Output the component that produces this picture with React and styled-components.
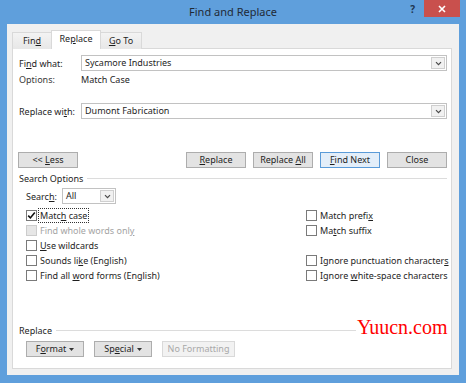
import React from 'react';
import styled, { createGlobalStyle } from 'styled-components';

const Global = createGlobalStyle`
  html, body { margin: 0; padding: 0; background: #fff; }
  body { font-family: "Noto Sans", "Open Sans", sans-serif; }
  * { box-sizing: border-box; }
`;

const Window = styled.div`
  position: relative;
  width: 466px;
  height: 383px;
  background: #5f9fdc;
  display: flex;
  flex-direction: column;
  padding: 0 7px 8px 7px;
  font-family: "Noto Sans", "Open Sans", sans-serif;
  font-size: 9px;
  color: #1e1e1e;
`;

const TitleBar = styled.div`
  height: 24px;
  margin: 0 -7px;
  display: grid;
  grid-template-columns: 1fr auto 1fr;
  align-items: start;
`;

const Title = styled.div`
  grid-column: 2;
  font-size: 11px;
  line-height: 24px;
  color: #1f2a36;
`;

const Controls = styled.div`
  grid-column: 3;
  justify-self: end;
  display: flex;
  align-items: flex-start;
  gap: 9px;
  padding-right: 6px;
`;

const Help = styled.div`
  font-weight: 700;
  font-size: 10px;
  line-height: 18px;
  color: #1d3650;
`;

const CloseBtn = styled.div`
  width: 36px;
  height: 17px;
  background: #c9504d;
  display: flex;
  align-items: center;
  justify-content: center;
`;

const Body = styled.div`
  flex: 1;
  background: #f0f0f0;
  padding: 6px 7px 6px 5px;
  display: flex;
  flex-direction: column;
`;

const Tabs = styled.div`
  display: flex;
  align-items: flex-end;
  height: 19px;
  margin-bottom: -1px;
  padding-left: 1px;
`;

const Tab = styled.div`
  width: ${p => p.$w}px;
  height: ${p => (p.$active ? 19 : 17)}px;
  margin-left: -1px;
  border: 1px solid #d9d9d9;
  border-bottom: none;
  background: ${p => (p.$active ? '#ffffff' : 'linear-gradient(#f3f3f3, #e7e7e7)')};
  position: relative;
  z-index: ${p => (p.$active ? 2 : 1)};
  text-align: center;
  line-height: 15px;
  color: #1e1e1e;
`;

const Panel = styled.div`
  flex: 1;
  background: #fff;
  border: 1px solid #d9d9d9;
  padding: 0 4px 0 6px;
  display: flex;
  flex-direction: column;
`;

const FieldRow = styled.div`
  display: flex;
  align-items: center;
  margin-top: ${p => p.$mt}px;
  height: ${p => p.$h || 16}px;
  padding-left: ${p => p.$pl || 0}px;
`;

const FieldLabel = styled.div`
  width: ${p => p.$w || 62}px;
  flex: none;
  color: ${p => (p.$muted ? '#3a3a3a' : '#1e1e1e')};
`;

const Combo = styled.div`
  display: flex;
  align-items: stretch;
  height: 16px;
  width: ${p => (p.$w ? `${p.$w}px` : 'auto')};
  flex: ${p => (p.$w ? 'none' : '1')};
  border: 1px solid #c2c2c2;
  background: #fff;
`;

const ComboText = styled.div`
  flex: 1;
  padding-left: 3px;
  line-height: 14px;
  white-space: nowrap;
  overflow: hidden;
`;

const ComboArrow = styled.div`
  width: 14px;
  flex: none;
  margin: 1px;
  border: 1px solid #cfcfcf;
  background: #f1f1f1;
  display: flex;
  align-items: center;
  justify-content: center;
`;

const Key = styled.span`
  text-decoration: underline;
  text-underline-offset: 1px;
`;

const ButtonRow = styled.div`
  display: flex;
  align-items: center;
  gap: ${p => p.$gap || 7}px;
  margin-top: ${p => p.$mt}px;
  padding-left: ${p => p.$pl || 0}px;
  margin-left: ${p => p.$ml || 0}px;
`;

const Spacer = styled.div`
  flex: 1;
`;

const Button = styled.div`
  width: ${p => p.$w}px;
  height: 16px;
  border: 1px solid ${p => (p.$default ? '#5a9bd8' : p.$disabled ? '#d9d9d9' : '#adadad')};
  background: ${p => (p.$default ? '#e3eef9' : p.$disabled ? '#f2f2f2' : '#e3e3e3')};
  color: ${p => (p.$disabled ? '#a8a8a8' : '#1e1e1e')};
  display: flex;
  align-items: center;
  justify-content: center;
  gap: 3px;
  line-height: 14px;
  white-space: nowrap;
`;

const Legend = styled.div`
  display: flex;
  align-items: center;
  gap: 4px;
  height: 12px;
  margin-top: ${p => p.$mt}px;
  white-space: nowrap;
  &::after {
    content: '';
    flex: 1;
    height: 1px;
    background: #dcdcdc;
  }
`;

const CheckGrid = styled.div`
  display: grid;
  grid-template-columns: 280px 1fr;
  grid-auto-rows: 15px;
  margin-top: 4px;
  padding-left: 7px;
`;

const CheckItem = styled.div`
  display: flex;
  align-items: center;
  gap: 1px;
  grid-column: ${p => p.$col};
  grid-row: ${p => p.$row};
  color: ${p => (p.$disabled ? '#a3a3a3' : '#1e1e1e')};
  white-space: nowrap;
`;

const Box = styled.div`
  width: 11px;
  height: 11px;
  flex: none;
  border: 1px solid ${p => (p.$disabled ? '#cccccc' : '#7a7a7a')};
  background: ${p => (p.$disabled ? '#e6e6e6' : '#fff')};
  display: flex;
  align-items: center;
  justify-content: center;
`;

const CheckText = styled.span`
  padding: 0 1px;
  line-height: 13px;
  border: 1px dotted ${p => (p.$focus ? '#333' : 'transparent')};
`;

const Watermark = styled.div`
  position: absolute;
  left: 356px;
  top: 315px;
  padding: 0 1px;
  background: #fff;
  font-family: "Liberation Serif", "Times New Roman", serif;
  font-size: 20px;
  line-height: 24px;
  color: #ff0000;
`;

const Chevron = () => (
  <svg width="7" height="5" viewBox="0 0 7 5">
    <path d="M1 1.2 L3.5 3.7 L6 1.2" fill="none" stroke="#4a4a4a" strokeWidth="1.2" />
  </svg>
);

const Caret = () => (
  <svg width="5" height="3" viewBox="0 0 5 3">
    <path d="M0 0 H5 L2.5 3 Z" fill="#333" />
  </svg>
);

const Tick = () => (
  <svg width="9" height="9" viewBox="0 0 9 9">
    <path d="M1.2 4.6 L3.4 6.9 L7.8 1.6" fill="none" stroke="#111" strokeWidth="1.6" />
  </svg>
);

const Check = ({ col, row, checked, disabled, focus, children }) => (
  <CheckItem $col={col} $row={row} $disabled={disabled}>
    <Box $disabled={disabled}>{checked && <Tick />}</Box>
    <CheckText $focus={focus}>{children}</CheckText>
  </CheckItem>
);

export default function App() {
  return (
    <>
      <Global />
      <Window>
        <TitleBar>
          <Title>Find and Replace</Title>
          <Controls>
            <Help>?</Help>
            <CloseBtn>
              <svg width="8" height="8" viewBox="0 0 8 8">
                <path d="M1 1 L7 7 M7 1 L1 7" stroke="#fff" strokeWidth="1.6" />
              </svg>
            </CloseBtn>
          </Controls>
        </TitleBar>
        <Body>
          <Tabs>
            <Tab $w={40}>Fin<Key>d</Key></Tab>
            <Tab $w={50} $active>Re<Key>p</Key>lace</Tab>
            <Tab $w={42}><Key>G</Key>o To</Tab>
          </Tabs>
          <Panel>
            <FieldRow $mt={6}>
              <FieldLabel>Fi<Key>n</Key>d what:</FieldLabel>
              <Combo>
                <ComboText>Sycamore Industries</ComboText>
                <ComboArrow><Chevron /></ComboArrow>
              </Combo>
            </FieldRow>
            <FieldRow $mt={1} $h={14}>
              <FieldLabel $muted>Options:</FieldLabel>
              <span>Match Case</span>
            </FieldRow>
            <FieldRow $mt={17}>
              <FieldLabel>Replace wi<Key>t</Key>h:</FieldLabel>
              <Combo>
                <ComboText>Dumont Fabrication</ComboText>
                <ComboArrow><Chevron /></ComboArrow>
              </Combo>
            </FieldRow>
            <ButtonRow $mt={33} $ml={-1}>
              <Button $w={60}><span>&lt;&lt; <Key>L</Key>ess</span></Button>
              <Spacer />
              <Button $w={60}><span><Key>R</Key>eplace</span></Button>
              <Button $w={60}><span>Replace <Key>A</Key>ll</span></Button>
              <Button $w={60} $default><span><Key>F</Key>ind Next</span></Button>
              <Button $w={60}><span>Close</span></Button>
            </ButtonRow>
            <Legend $mt={4}>Search Options</Legend>
            <FieldRow $mt={4} $pl={7}>
              <FieldLabel $w={36}>Searc<Key>h</Key>:</FieldLabel>
              <Combo $w={54}>
                <ComboText>All</ComboText>
                <ComboArrow><Chevron /></ComboArrow>
              </Combo>
            </FieldRow>
            <CheckGrid>
              <Check col={1} row={1} checked focus>Matc<Key>h</Key> case</Check>
              <Check col={1} row={2} disabled>Find whole words onl<Key>y</Key></Check>
              <Check col={1} row={3}><Key>U</Key>se wildcards</Check>
              <Check col={1} row={4}>Sounds li<Key>k</Key>e (English)</Check>
              <Check col={1} row={5}>Find all <Key>w</Key>ord forms (English)</Check>
              <Check col={2} row={1}>Match prefi<Key>x</Key></Check>
              <Check col={2} row={2}>Ma<Key>t</Key>ch suffix</Check>
              <Check col={2} row={4}>Ignore punctuation character<Key>s</Key></Check>
              <Check col={2} row={5}>Ignore <Key>w</Key>hite-space characters</Check>
            </CheckGrid>
            <Legend $mt={41}>Replace</Legend>
            <ButtonRow $mt={5} $pl={7} $gap={10}>
              <Button $w={58}><span>F<Key>o</Key>rmat</span><Caret /></Button>
              <Button $w={58}><span>Sp<Key>e</Key>cial</span><Caret /></Button>
              <Button $w={73} $disabled><span>No Formatting</span></Button>
            </ButtonRow>
          </Panel>
        </Body>
        <Watermark>Yuucn.com</Watermark>
      </Window>
    </>
  );
}
